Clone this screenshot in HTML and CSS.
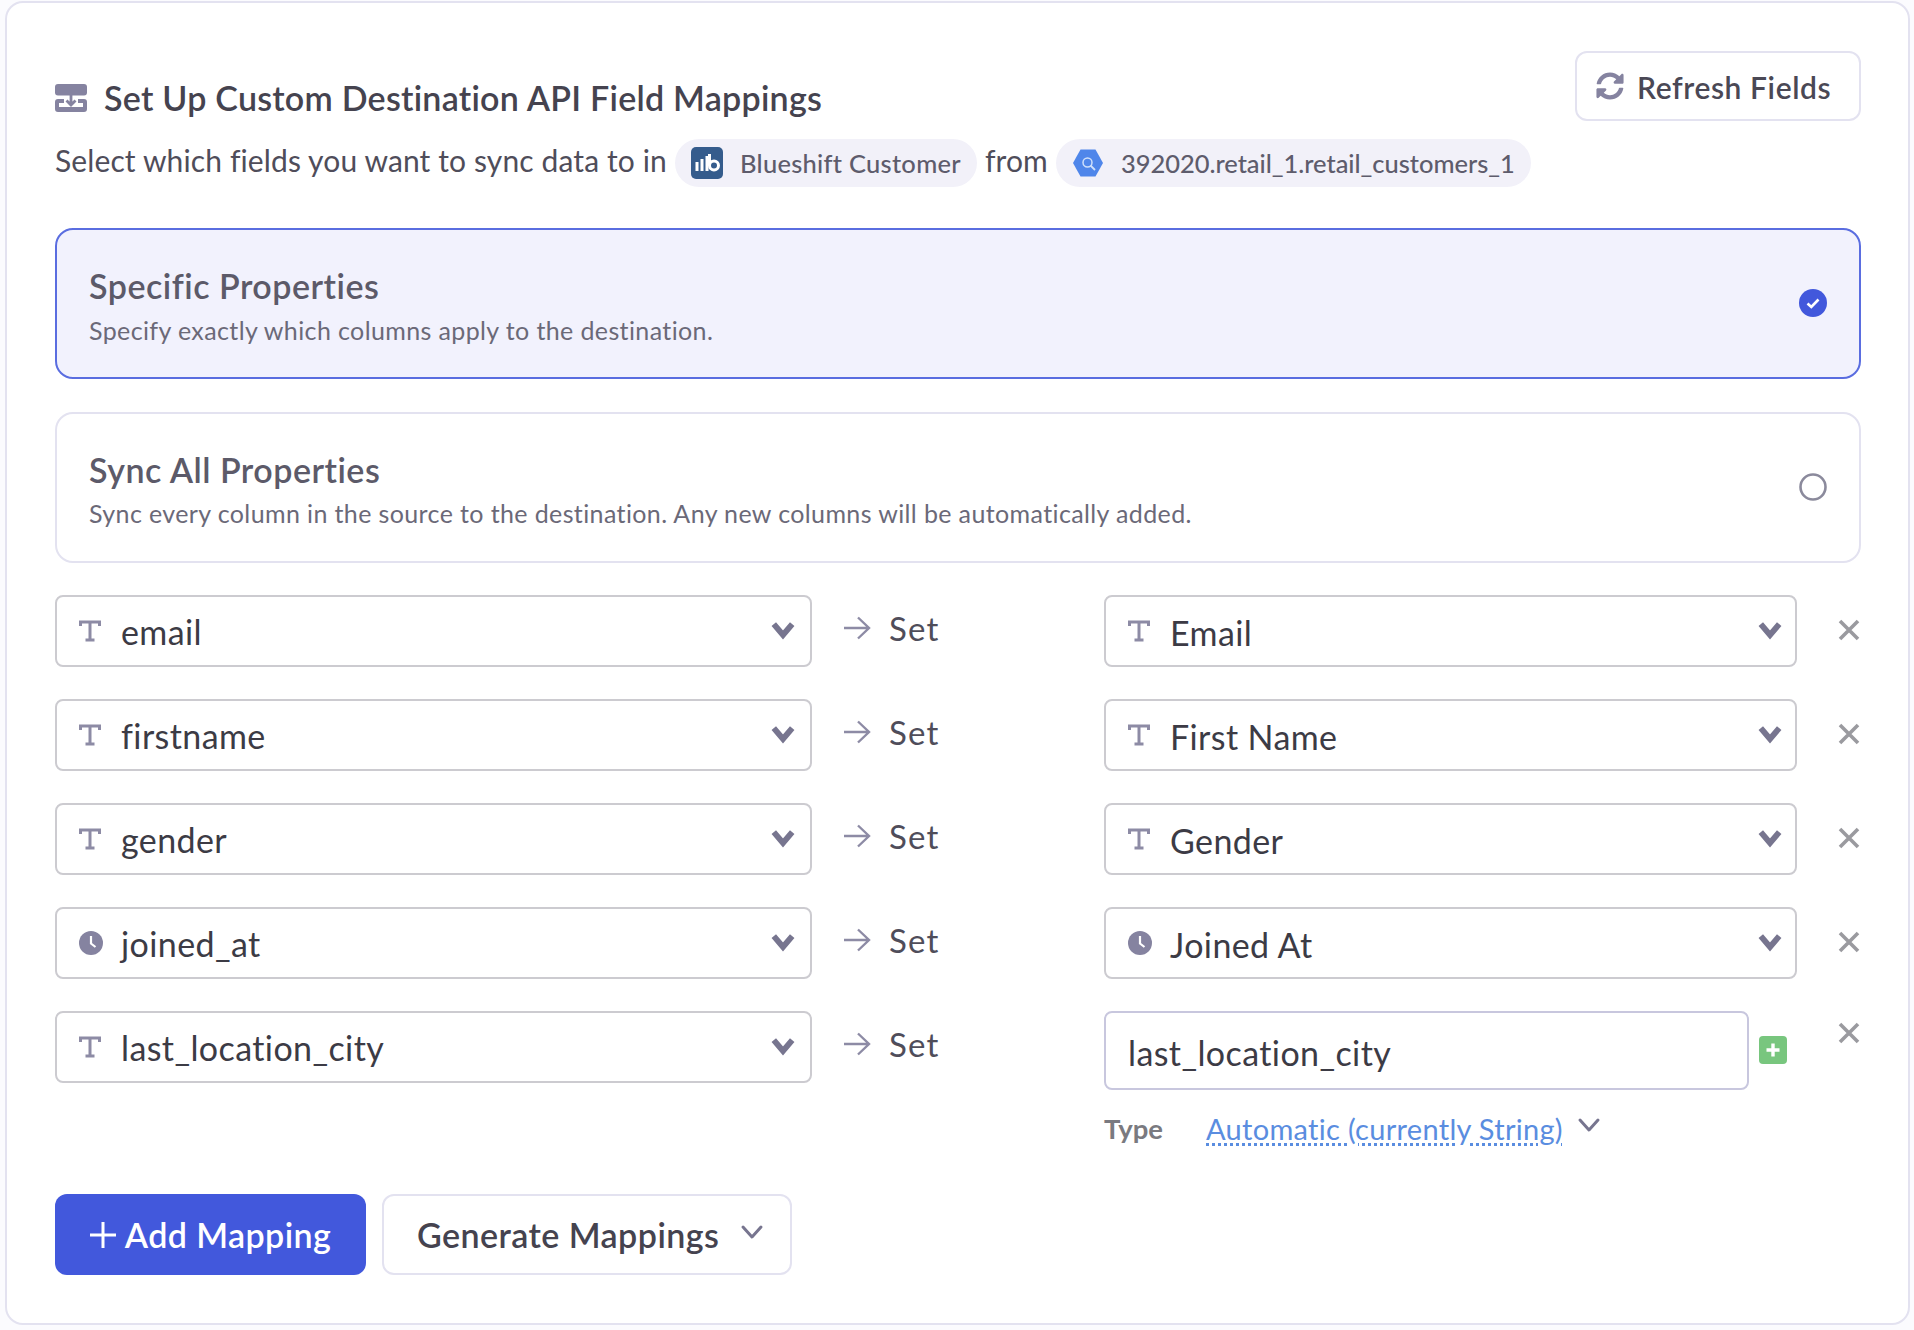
FILE: index.html
```html
<!DOCTYPE html>
<html lang="en">
<head>
<meta charset="utf-8">
<title>Field Mappings</title>
<link rel="stylesheet" href="styles.css">
</head>
<body>
<svg class="sprites" width="0" height="0" aria-hidden="true">
  <symbol id="i-t" viewBox="0 0 22 22"><path d="M1.500 6V2h19v4M11 2v18M6.500 20h9" fill="none" stroke="currentColor" stroke-width="3"/></symbol>
  <symbol id="i-clock" viewBox="0 0 24 24"><circle cx="12" cy="12" r="12" fill="currentColor"/><path d="M12 5v7.500l4.500 3.500" fill="none" stroke="#fff" stroke-width="2.200"/></symbol>
  <symbol id="i-chev" viewBox="0 0 24 18"><path d="M3.500 3.500l8.500 10 8.500-10" fill="none" stroke="currentColor" stroke-width="5.400" stroke-linejoin="miter"/></symbol>
  <symbol id="i-chev-thin" viewBox="0 0 24 16"><path d="M3 3l9 10L21 3" fill="none" stroke="currentColor" stroke-width="3" stroke-linecap="round" stroke-linejoin="round"/></symbol>
  <symbol id="i-arrow" viewBox="0 0 28 24"><path d="M1 12h25M15 1.500L26 12 15 22.500" fill="none" stroke="currentColor" stroke-width="2.400"/></symbol>
  <symbol id="i-x" viewBox="0 0 22 22"><path d="M2 2l18 18M20 2L2 20" fill="none" stroke="currentColor" stroke-width="3.600"/></symbol>
</svg>
<main class="card">
  <header class="head">
    <div class="head-text">
      <h1 class="title">
        <svg class="title-icon" viewBox="0 0 32 28"><rect x="0" y="0" width="32" height="11.500" rx="3" fill="currentColor"/><path d="M0 18a3 3 0 0 1 3-3h6v4h-5v4h24v-4h-5v-4h6a3 3 0 0 1 3 3v7a3 3 0 0 1-3 3H3a3 3 0 0 1-3-3z" fill="currentColor"/><path d="M16 11v9M11.500 16.500L16 21l4.500-4.500" fill="none" stroke="currentColor" stroke-width="2.800"/></svg>
        Set Up Custom Destination API Field Mappings
      </h1>
      <p class="sub">
        <span>Select which fields you want to sync data to in</span>
        <span class="pill pill-spaced">
          <svg class="pill-icon" viewBox="0 0 32 32"><rect width="32" height="32" rx="5" fill="#355c8c"/><path d="M6 15v9M11 12v12M16 9v15" stroke="#fff" stroke-width="3" fill="none"/><circle cx="23" cy="18.500" r="4.500" fill="none" stroke="#fff" stroke-width="3"/><path d="M18.500 7v11.500" stroke="#fff" stroke-width="3"/></svg>
          Blueshift Customer
        </span>
        <span>from</span>
        <span class="pill">
          <svg class="pill-icon" viewBox="0 0 32 32"><path d="M1 16L8.500 2.500h15L31 16l-7.500 13.500h-15z" fill="#4f86ea"/><circle cx="15.500" cy="15.500" r="4.500" fill="none" stroke="#cfe0fb" stroke-width="1.500"/><path d="M18.500 18.500l4.500 4.500" stroke="#cfe0fb" stroke-width="1.800"/></svg>
          392020.retail_1.retail_customers_1
        </span>
      </p>
    </div>
    <button class="btn btn-refresh">
      <svg class="refresh-icon" viewBox="0 0 512 512"><path fill="currentColor" d="M370.72 133.28C339.458 104.008 298.888 87.962 255.848 88c-77.458.068-144.328 53.178-162.791 126.85-1.344 5.363-6.122 9.15-11.651 9.15H24.103c-7.498 0-13.194-6.807-11.807-14.176C33.933 94.924 134.813 8 256 8c66.448 0 126.791 26.136 171.315 68.685L463.03 40.97C478.149 25.851 504 36.559 504 57.941V192c0 13.255-10.745 24-24 24H345.941c-21.382 0-32.09-25.851-16.971-40.971l41.75-41.749zM32 296h134.059c21.382 0 32.09 25.851 16.971 40.971l-41.75 41.75c31.262 29.273 71.835 45.319 114.876 45.28 77.418-.07 144.315-53.144 162.787-126.849 1.344-5.363 6.122-9.15 11.651-9.15h57.304c7.498 0 13.194 6.807 11.807 14.176C478.067 417.076 377.187 504 256 504c-66.448 0-126.791-26.136-171.315-68.685L48.97 471.03C33.851 486.149 8 475.441 8 454.059V320c0-13.255 10.745-24 24-24z"/></svg>
      <span>Refresh Fields</span>
    </button>
  </header>

  <section class="option option-on">
    <div class="option-text">
      <div class="option-title">Specific Properties</div>
      <div class="option-desc">Specify exactly which columns apply to the destination.</div>
    </div>
    <svg class="radio" viewBox="0 0 28 28"><circle cx="14" cy="14" r="14" fill="#4258dc"/><path d="M8.500 14.500l3.800 3.500 7.200-7.500" fill="none" stroke="#fff" stroke-width="2.600"/></svg>
  </section>
  <section class="option">
    <div class="option-text">
      <div class="option-title">Sync All Properties</div>
      <div class="option-desc">Sync every column in the source to the destination. Any new columns will be automatically added.</div>
    </div>
    <svg class="radio" viewBox="0 0 28 28"><circle cx="14" cy="14" r="12.500" fill="none" stroke="#8b8a9c" stroke-width="2.600"/></svg>
  </section>

  <div class="rows">
    <div class="row">
      <div class="select"><svg class="type-t"><use href="#i-t"/></svg><span class="val">email</span><svg class="chev"><use href="#i-chev"/></svg></div>
      <div class="set"><svg class="arrow"><use href="#i-arrow"/></svg><span>Set</span></div>
      <div class="select select-r"><svg class="type-t"><use href="#i-t"/></svg><span class="val">Email</span><svg class="chev"><use href="#i-chev"/></svg></div>
      <svg class="x"><use href="#i-x"/></svg>
    </div>
    <div class="row">
      <div class="select"><svg class="type-t"><use href="#i-t"/></svg><span class="val">firstname</span><svg class="chev"><use href="#i-chev"/></svg></div>
      <div class="set"><svg class="arrow"><use href="#i-arrow"/></svg><span>Set</span></div>
      <div class="select select-r"><svg class="type-t"><use href="#i-t"/></svg><span class="val">First Name</span><svg class="chev"><use href="#i-chev"/></svg></div>
      <svg class="x"><use href="#i-x"/></svg>
    </div>
    <div class="row">
      <div class="select"><svg class="type-t"><use href="#i-t"/></svg><span class="val">gender</span><svg class="chev"><use href="#i-chev"/></svg></div>
      <div class="set"><svg class="arrow"><use href="#i-arrow"/></svg><span>Set</span></div>
      <div class="select select-r"><svg class="type-t"><use href="#i-t"/></svg><span class="val">Gender</span><svg class="chev"><use href="#i-chev"/></svg></div>
      <svg class="x"><use href="#i-x"/></svg>
    </div>
    <div class="row">
      <div class="select"><svg class="type-c"><use href="#i-clock"/></svg><span class="val">joined_at</span><svg class="chev"><use href="#i-chev"/></svg></div>
      <div class="set"><svg class="arrow"><use href="#i-arrow"/></svg><span>Set</span></div>
      <div class="select select-r"><svg class="type-c"><use href="#i-clock"/></svg><span class="val">Joined At</span><svg class="chev"><use href="#i-chev"/></svg></div>
      <svg class="x"><use href="#i-x"/></svg>
    </div>
    <div class="row">
      <div class="select"><svg class="type-t"><use href="#i-t"/></svg><span class="val">last_location_city</span><svg class="chev"><use href="#i-chev"/></svg></div>
      <div class="set"><svg class="arrow"><use href="#i-arrow"/></svg><span>Set</span></div>
      <div class="custom">
        <div class="custom-line">
          <div class="input">last_location_city</div>
          <span class="plus"><svg viewBox="0 0 28 28"><path d="M14 7.500v13M7.500 14h13" stroke="#fff" stroke-width="3.400" fill="none"/></svg></span>
        </div>
        <div class="type-line">
          <span class="type-label">Type</span>
          <span class="type-link">Automatic (currently String)</span>
          <svg class="chev-small"><use href="#i-chev-thin"/></svg>
        </div>
      </div>
      <svg class="x x-custom"><use href="#i-x"/></svg>
    </div>
  </div>

  <footer class="actions">
    <button class="btn btn-add"><svg class="add-plus" viewBox="0 0 26 26"><path d="M13 0v26M0 13h26" stroke="#fff" stroke-width="3"/></svg>Add Mapping</button>
    <button class="btn btn-gen">Generate Mappings<svg class="chev-gen"><use href="#i-chev-thin"/></svg></button>
  </footer>
</main>
</body>
</html>
```

FILE: styles.css
```css
* { box-sizing: border-box; }
html, body { margin: 0; padding: 0; }
body {
  width: 1914px;
  height: 1330px;
  background: #fbfbfe;
  padding: 1px 4px 5px 5px;
  font-family: Lato, "Liberation Sans", sans-serif;
  color: #45434f;
}
.sprites { position: absolute; }
.card {
  background: #fff;
  border: 2px solid #e3e2f0;
  border-radius: 18px;
  height: 1324px;
  padding: 48px 47px 0 48px;
}
.head { display: flex; justify-content: space-between; align-items: flex-start; height: 177px; }
.head-text { flex: none; }
.title {
  display: flex;
  align-items: center;
  gap: 17px;
  margin: 27px 0 0;
  font-size: 34px;
  line-height: 40px;
  font-weight: 600;
  letter-spacing: 0.25px;
  color: #45434f;
}
.title-icon { width: 32px; height: 28px; color: #8583a0; flex: none; }
.sub {
  display: flex;
  align-items: center;
  gap: 8px;
  margin: 21px 0 0;
  font-size: 30px;
  letter-spacing: 0.12px;
  color: #4f4d5a;
  height: 48px;
  white-space: nowrap;
}
.sub > span:not(.pill) { position: relative; top: -3px; }
.pill {
  display: flex;
  align-items: center;
  gap: 17px;
  height: 48px;
  padding: 0 16px;
  background: #f2f1f9;
  border-radius: 24px;
  font-size: 25.5px;
  letter-spacing: -0.03px;
  font-weight: 500;
  color: #5e5c6c;
}
.pill-spaced { letter-spacing: 0.27px; }
.pill-icon { width: 32px; height: 32px; flex: none; }
.btn {
  font-family: inherit;
  cursor: pointer;
  background: #fff;
  border: 2px solid #e3e2f0;
  border-radius: 12px;
}
.btn-refresh {
  display: flex;
  align-items: center;
  gap: 13px;
  width: 286px;
  height: 70px;
  padding: 0 0 0 19px;
  font-size: 30px;
  font-weight: 600;
  letter-spacing: 0.6px;
  color: #4a4855;
}
.btn-refresh span { padding-top: 2px; }
.refresh-icon { width: 28px; height: 28px; color: #8583a0; }
.option {
  display: flex;
  align-items: center;
  justify-content: space-between;
  height: 151px;
  margin-bottom: 32.5px;
  padding: 0 32px 0 32px;
  border: 2px solid #e3e2f0;
  border-radius: 18px;
  background: #fff;
}
.option-on { background: #f2f2fd; border-color: #5a6de0; }
.option-text { padding-top: 5px; }
.option-title { font-size: 34px; font-weight: 600; line-height: 40px; letter-spacing: 0.5px; color: #5c5a69; }
.option-desc { margin-top: 7.5px; font-size: 25px; line-height: 32px; letter-spacing: 0.38px; color: #6b6978; }
.radio { width: 28px; height: 28px; flex: none; margin-top: -1px; }
.rows { display: flex; flex-direction: column; gap: 32px; }
.row { display: flex; align-items: flex-start; }
.select {
  display: flex;
  align-items: center;
  width: 757px;
  height: 72px;
  flex: none;
  padding: 0 14px 0 22px;
  border: 2px solid #cccbd0;
  border-radius: 8px;
  background: #fff;
}
.select-r { width: 693px; padding-right: 12px; }
.select-r .val { padding-top: 2px; }
.val { flex: 1; margin-left: 20px; font-size: 34px; letter-spacing: 0.4px; color: #3c3b45; }
.type-t { width: 22px; height: 22px; color: #8d8ba5; flex: none; }
.type-c { width: 24px; height: 24px; color: #8583a0; flex: none; margin-right: -2px; }
.chev { width: 26px; height: 20px; color: #77758f; flex: none; margin-top: -2px; }
.set {
  display: flex;
  align-items: center;
  gap: 18px;
  width: 292px;
  flex: none;
  height: 65px;
  padding-left: 31px;
  font-size: 33px;
  letter-spacing: 1.2px;
  color: #4f4d5a;
}
.arrow { width: 28px; height: 24px; color: #8d8ba5; flex: none; }
.x { width: 22px; height: 22px; color: #9a9a9f; flex: none; margin: 24px 0 0 41px; }
.x-custom { margin-top: 11px; }
.custom { width: 693px; flex: none; }
.custom-line { display: flex; align-items: center; }
.input {
  width: 645px;
  height: 79px;
  padding: 4px 22px 0;
  display: flex;
  align-items: center;
  font-size: 34px;
  letter-spacing: 0.4px;
  color: #3c3b45;
  border: 2px solid #c8c7de;
  border-radius: 8px;
}
.plus {
  display: block;
  width: 28px;
  height: 28px;
  margin-left: 10px;
  margin-top: -2px;
  background: #78c67e;
  border-radius: 4px;
}
.plus svg { display: block; width: 28px; height: 28px; }
.type-line { display: flex; align-items: center; margin-top: 21px; height: 34px; }
.type-label { width: 102px; font-size: 27.5px; font-weight: 700; color: #7a7a80; }
.type-link {
  font-size: 29px;
  letter-spacing: 0.3px;
  color: #5a8de0;
  text-decoration: underline dotted;
  text-underline-offset: 4px;
}
.chev-small { width: 24px; height: 16px; color: #77758f; margin: -6px 0 0 14px; }
.actions { display: flex; gap: 16px; margin-top: 49px; }
.btn-add {
  display: flex;
  align-items: center;
  justify-content: center;
  gap: 9px;
  width: 311px;
  height: 81px;
  background: #4258dc;
  border: 0;
  border-radius: 12px;
  font-size: 34px;
  font-weight: 600;
  letter-spacing: 0.4px;
  color: #fff;
}
.add-plus { width: 26px; height: 26px; }
.btn-gen {
  display: flex;
  align-items: center;
  gap: 21px;
  width: 410px;
  height: 81px;
  padding: 0 0 0 33px;
  font-size: 34px;
  font-weight: 600;
  letter-spacing: 0.45px;
  color: #45434f;
}
.chev-gen { width: 24px; height: 16px; color: #77758f; margin-top: -6px; }
```
